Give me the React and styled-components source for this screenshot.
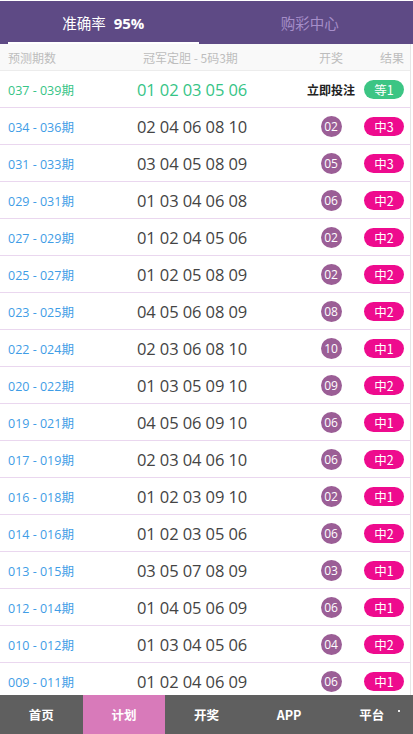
import React from "react";
import styled, { createGlobalStyle } from "styled-components";

const Global = createGlobalStyle`
  html, body { margin: 0; padding: 0; background: #fff; }
  body { font-family: "Open Sans", "Noto Sans CJK SC", sans-serif; }
  * { box-sizing: border-box; }
`;

const Page = styled.div`
  width: 413px;
  height: 734px;
  display: flex;
  flex-direction: column;
  overflow: hidden;
  border-top: 1px solid #fff;
`;

const Header = styled.div`
  height: 43px;
  background: #5e4a85;
  display: flex;
  flex-shrink: 0;
`;

const Tab = styled.div`
  flex: 1;
  margin: 0 8px;
  display: flex;
  align-items: center;
  justify-content: center;
  font-size: 14.5px;
  color: ${(p) => (p.$active ? "#fff" : "#a68ec9")};
  border-bottom: 2px solid ${(p) => (p.$active ? "#fff" : "transparent")};
  padding-top: 2px;
  gap: 8px;
`;

const Strong = styled.b`
  font-weight: 700;
  font-size: 15px;
`;

const Body = styled.div`
  flex: 1;
  width: 411px;
  border-right: 1px solid #e6e6e6;
  overflow: hidden;
`;

const Grid = styled.div`
  display: grid;
  grid-template-columns: 129px 173px 42px 52px;
  padding: 0 6px 0 8px;
  align-items: center;
`;

const HeadRow = styled(Grid)`
  height: 27px;
  background: #f9f9f9;
  border-bottom: 1px solid #ececec;
  color: #bdbdbd;
  font-size: 12px;
  font-family: "Noto Sans CJK SC", sans-serif;
`;

const HeadCell = styled.div`
  text-align: ${(p) => p.$align || "left"};
  padding-left: ${(p) => p.$pl || 0}px;
  white-space: nowrap;
`;

const Row = styled(Grid)`
  height: 37px;
  border-bottom: 1px solid #ead7ef;
`;

const Period = styled.div`
  font-size: 12.5px;
  color: ${(p) => (p.$first ? "#36c486" : "#3f9de6")};
  font-family: "Open Sans", "Noto Sans CJK SC", sans-serif;
  white-space: nowrap;
`;

const Nums = styled.div`
  font-size: 16.5px;
  color: ${(p) => (p.$first ? "#36c486" : "#444")};
  white-space: nowrap;
  letter-spacing: -0.1px;
`;

const OpenCell = styled.div`
  display: flex;
  justify-content: center;
  overflow: visible;
`;

const Ball = styled.span`
  width: 21px;
  height: 21px;
  border-radius: 50%;
  background: #9b5e96;
  color: #fff;
  font-size: 12px;
  display: flex;
  align-items: center;
  justify-content: center;
`;

const BetLink = styled.span`
  font-size: 12px;
  font-weight: 600;
  color: #222;
  white-space: nowrap;
  font-family: "Noto Sans CJK SC", sans-serif;
`;

const ResultCell = styled.div`
  display: flex;
  justify-content: flex-end;
`;

const Badge = styled.span`
  width: 40px;
  height: 19px;
  border-radius: 10px;
  background: ${(p) => (p.$green ? "#3cc584" : "#ee0b8e")};
  color: #fff;
  font-size: 12.5px;
  display: flex;
  align-items: center;
  justify-content: center;
  font-family: "Noto Sans CJK SC", sans-serif;
`;

const Nav = styled.div`
  height: 39px;
  background: #5f5f5f;
  display: grid;
  grid-template-columns: repeat(5, 1fr);
  flex-shrink: 0;
  position: relative;
`;

const NavItem = styled.div`
  display: flex;
  align-items: center;
  justify-content: center;
  color: #fff;
  font-size: 12.5px;
  font-weight: 600;
  background: ${(p) => (p.$active ? "#d87aba" : "transparent")};
  font-family: "Noto Sans CJK SC", sans-serif;
`;

const Dot = styled.span`
  position: absolute;
  right: 13px;
  top: 15px;
  width: 2px;
  height: 2px;
  background: #eee;
`;

const rows = [
  ["037 - 039期", "01 02 03 05 06", null, "等1"],
  ["034 - 036期", "02 04 06 08 10", "02", "中3"],
  ["031 - 033期", "03 04 05 08 09", "05", "中3"],
  ["029 - 031期", "01 03 04 06 08", "06", "中2"],
  ["027 - 029期", "01 02 04 05 06", "02", "中2"],
  ["025 - 027期", "01 02 05 08 09", "02", "中2"],
  ["023 - 025期", "04 05 06 08 09", "08", "中2"],
  ["022 - 024期", "02 03 06 08 10", "10", "中1"],
  ["020 - 022期", "01 03 05 09 10", "09", "中2"],
  ["019 - 021期", "04 05 06 09 10", "06", "中1"],
  ["017 - 019期", "02 03 04 06 10", "06", "中2"],
  ["016 - 018期", "01 02 03 09 10", "02", "中1"],
  ["014 - 016期", "01 02 03 05 06", "06", "中2"],
  ["013 - 015期", "03 05 07 08 09", "03", "中1"],
  ["012 - 014期", "01 04 05 06 09", "06", "中1"],
  ["010 - 012期", "01 03 04 05 06", "04", "中2"],
  ["009 - 011期", "01 02 04 06 09", "06", "中1"],
];

export default function App() {
  return (
    <>
      <Global />
      <Page>
        <Header>
          <Tab $active>
            <span>准确率</span>
            <Strong>95%</Strong>
          </Tab>
          <Tab>购彩中心</Tab>
        </Header>
        <Body>
          <HeadRow>
            <HeadCell>预测期数</HeadCell>
            <HeadCell $pl={6}>冠军定胆 - 5码3期</HeadCell>
            <HeadCell $align="center">开奖</HeadCell>
            <HeadCell $align="right">结果</HeadCell>
          </HeadRow>
          {rows.map(([p, n, o, r], i) => (
            <Row key={p}>
              <Period $first={i === 0}>{p}</Period>
              <Nums $first={i === 0}>{n}</Nums>
              <OpenCell>
                {o ? <Ball>{o}</Ball> : <BetLink>立即投注</BetLink>}
              </OpenCell>
              <ResultCell>
                <Badge $green={i === 0}>{r}</Badge>
              </ResultCell>
            </Row>
          ))}
        </Body>
        <Nav>
          <NavItem>首页</NavItem>
          <NavItem $active>计划</NavItem>
          <NavItem>开奖</NavItem>
          <NavItem>APP</NavItem>
          <NavItem>平台</NavItem>
          <Dot />
        </Nav>
      </Page>
    </>
  );
}
